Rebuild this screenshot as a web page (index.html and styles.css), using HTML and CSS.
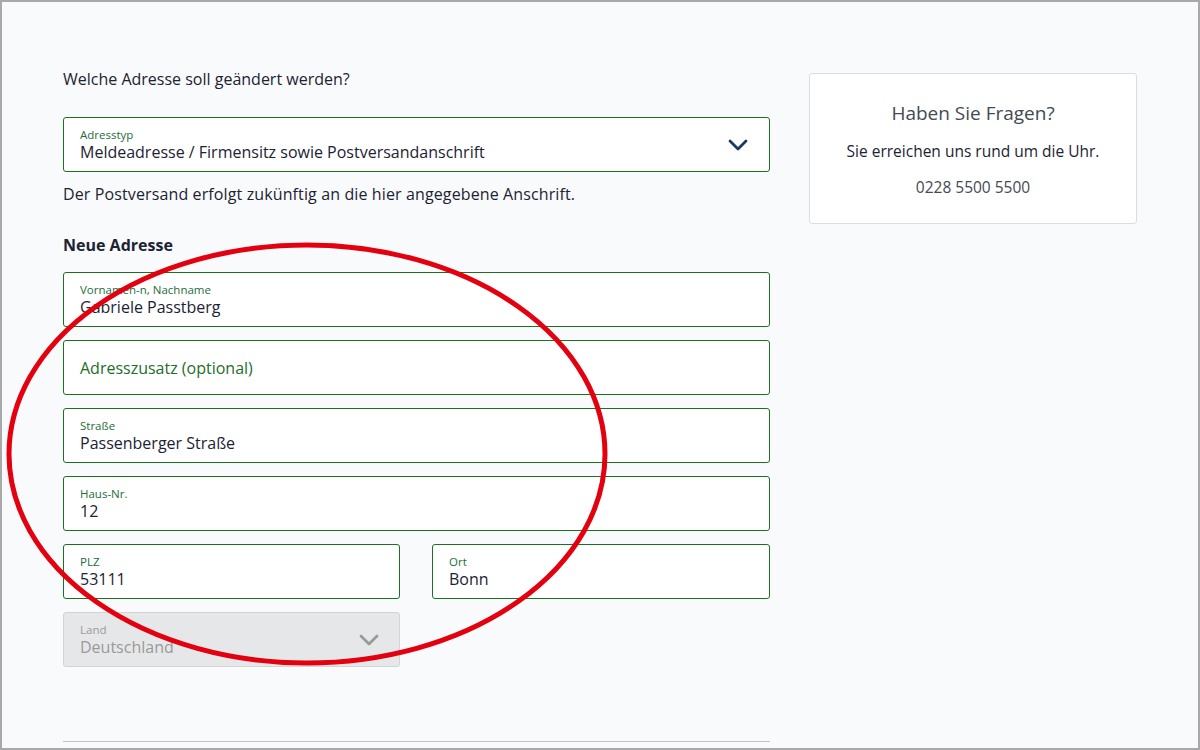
FILE: index.html
```html
<!DOCTYPE html>
<html lang="de">
<head>
    <meta charset="UTF-8">
    <title>Adresse ändern</title>
    <link rel="stylesheet" href="styles.css">
</head>
<body>
    <div class="frame">
        <div class="page">
            <main class="form-col">
                <p class="question">Welche Adresse soll geändert werden?</p>
                <div class="field select">
                    <div class="field-text">
                        <span class="label">Adresstyp</span>
                        <span class="value">Meldeadresse / Firmensitz sowie Postversandanschrift</span>
                    </div>
                    <svg class="chevron" width="20" height="12" viewBox="0 0 20 12"><path d="M2 2l8 8 8-8" fill="none" stroke="#1b3768" stroke-width="2.8" stroke-linecap="round" stroke-linejoin="round"/></svg>
                </div>
                <p class="hint">Der Postversand erfolgt zukünftig an die hier angegebene Anschrift.</p>

                <h2 class="section-title">Neue Adresse</h2>
                <div class="fields">
                    <div class="field">
                        <div class="field-text">
                            <span class="label">Vornamen-n, Nachname</span>
                            <span class="value">Gabriele Passtberg</span>
                        </div>
                    </div>
                    <div class="field">
                        <span class="placeholder">Adresszusatz (optional)</span>
                    </div>
                    <div class="field">
                        <div class="field-text">
                            <span class="label">Straße</span>
                            <span class="value">Passenberger Straße</span>
                        </div>
                    </div>
                    <div class="field">
                        <div class="field-text">
                            <span class="label">Haus-Nr.</span>
                            <span class="value">12</span>
                        </div>
                    </div>
                    <div class="field-row">
                        <div class="field">
                            <div class="field-text">
                                <span class="label">PLZ</span>
                                <span class="value">53111</span>
                            </div>
                        </div>
                        <div class="field">
                            <div class="field-text">
                                <span class="label">Ort</span>
                                <span class="value">Bonn</span>
                            </div>
                        </div>
                    </div>
                    <div class="field-row">
                        <div class="field select disabled">
                            <div class="field-text">
                                <span class="label">Land</span>
                                <span class="value">Deutschland</span>
                            </div>
                            <svg class="chevron" width="20" height="12" viewBox="0 0 20 12"><path d="M2 2l8 8 8-8" fill="none" stroke="#9a9a9a" stroke-width="2.8" stroke-linecap="round" stroke-linejoin="round"/></svg>
                        </div>
                    </div>
                </div>
                <hr class="divider">
            </main>

            <aside class="help-card">
                <h3>Haben Sie Fragen?</h3>
                <p>Sie erreichen uns rund um die Uhr.</p>
                <p class="phone">0228 5500 5500</p>
            </aside>
        </div>

        <svg class="marker" width="1196" height="746" viewBox="0 0 1196 746">
            <ellipse cx="305" cy="452" rx="298" ry="209" fill="none" stroke="#e3000f" stroke-width="5"/>
        </svg>
    </div>
</body>
</html>
```

FILE: styles.css
```css
*{box-sizing:border-box}
body{margin:0;font-family:"Open Sans","Noto Sans",Arial,sans-serif;color:#1c2333;background:#fff}
.frame{position:relative;width:1200px;height:750px;border:2px solid #a9a9a9;background:#f9fafc;overflow:hidden}
.page{display:flex;align-items:flex-start;padding:66px 0 0 61px}
.form-col{width:707px}
.question{margin:0;font-size:16px;line-height:22px}
.field{display:flex;align-items:center;height:55px;padding:0 16px;background:#fff;border:1px solid #1d7020;border-radius:3px}
.select{margin-top:27px;justify-content:space-between}
.select .chevron{margin-right:5px}
.field-text{display:flex;flex-direction:column}
.label{font-size:11.5px;line-height:14px;color:#1d6e3a}
.value{font-size:16px;line-height:20px;color:#1c2333}
.placeholder{font-size:16px;line-height:20px;color:#1d6e2a}
.hint{margin:11px 0 0;font-size:16px;line-height:22px;letter-spacing:.12px}
.section-title{margin:29px 0 16px;font-size:16px;line-height:22px;font-weight:700}
.fields{display:flex;flex-direction:column;gap:13px}
.field-row{display:grid;grid-template-columns:337px 338px;gap:32px}
.disabled{margin-top:0;background:#e6e7e9;border-color:#d2d3d5}
.disabled .label,.disabled .value{color:#9a9a9a}
.disabled .chevron{margin-right:4px}
.divider{margin:74px 0 0;border:0;border-top:1px solid #c4c4c4}
.help-card{width:328px;margin:5px 0 0 39px;padding:27px 16px 26px;background:#fff;border:1px solid #dcdde0;border-radius:3px;text-align:center}
.help-card h3{margin:0;font-size:19px;line-height:24px;font-weight:400;color:#444a52}
.help-card p{margin:16px 0 0;font-size:15.5px;line-height:20px;color:#1c2333}
.help-card .phone{color:#444a52}
.marker{position:absolute;top:0;left:0;pointer-events:none}
```
